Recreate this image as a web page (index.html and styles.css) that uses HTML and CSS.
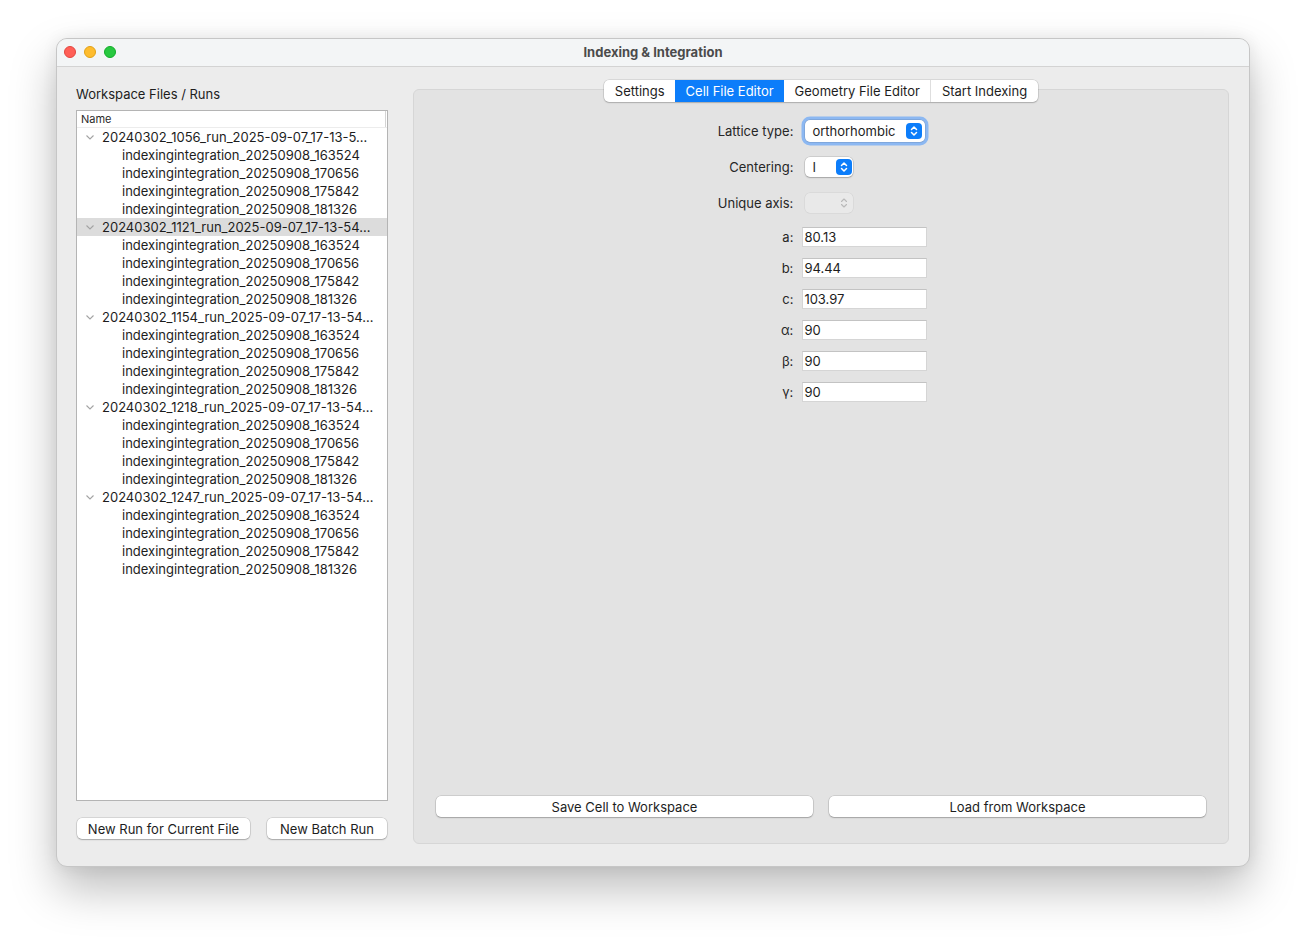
FILE: index.html
```html
<!DOCTYPE html>
<html lang="en">
<head>
    <meta charset="UTF-8">
    <title>Indexing &amp; Integration</title>
    <link rel="stylesheet" href="styles.css">
</head>
<body>
<div class="window">
    <div class="titlebar">
        <div class="lights">
            <span class="light close"></span>
            <span class="light min"></span>
            <span class="light max"></span>
        </div>
        <div class="title">Indexing &amp; Integration</div>
        <div></div>
    </div>

    <div class="content">
        <!-- workspace tree -->
        <div class="side">
            <div class="side-label">Workspace Files / Runs</div>
            <div class="tree">
                <div class="tree-head"><span>Name</span></div>
                <div class="tree-body">
                    <div class="row parent"><svg class="chev" viewBox="0 0 8 5"><polyline points="0.5,0.5 4,4 7.5,0.5"/></svg><span>20240302_1056_run_2025-09-07_17-13-5…</span></div>
                    <div class="row child">indexingintegration_20250908_163524</div>
                    <div class="row child">indexingintegration_20250908_170656</div>
                    <div class="row child">indexingintegration_20250908_175842</div>
                    <div class="row child">indexingintegration_20250908_181326</div>
                    <div class="row parent selected"><svg class="chev" viewBox="0 0 8 5"><polyline points="0.5,0.5 4,4 7.5,0.5"/></svg><span>20240302_1121_run_2025-09-07_17-13-54…</span></div>
                    <div class="row child">indexingintegration_20250908_163524</div>
                    <div class="row child">indexingintegration_20250908_170656</div>
                    <div class="row child">indexingintegration_20250908_175842</div>
                    <div class="row child">indexingintegration_20250908_181326</div>
                    <div class="row parent"><svg class="chev" viewBox="0 0 8 5"><polyline points="0.5,0.5 4,4 7.5,0.5"/></svg><span>20240302_1154_run_2025-09-07_17-13-54…</span></div>
                    <div class="row child">indexingintegration_20250908_163524</div>
                    <div class="row child">indexingintegration_20250908_170656</div>
                    <div class="row child">indexingintegration_20250908_175842</div>
                    <div class="row child">indexingintegration_20250908_181326</div>
                    <div class="row parent"><svg class="chev" viewBox="0 0 8 5"><polyline points="0.5,0.5 4,4 7.5,0.5"/></svg><span>20240302_1218_run_2025-09-07_17-13-54…</span></div>
                    <div class="row child">indexingintegration_20250908_163524</div>
                    <div class="row child">indexingintegration_20250908_170656</div>
                    <div class="row child">indexingintegration_20250908_175842</div>
                    <div class="row child">indexingintegration_20250908_181326</div>
                    <div class="row parent"><svg class="chev" viewBox="0 0 8 5"><polyline points="0.5,0.5 4,4 7.5,0.5"/></svg><span>20240302_1247_run_2025-09-07_17-13-54…</span></div>
                    <div class="row child">indexingintegration_20250908_163524</div>
                    <div class="row child">indexingintegration_20250908_170656</div>
                    <div class="row child">indexingintegration_20250908_175842</div>
                    <div class="row child">indexingintegration_20250908_181326</div>
                </div>
            </div>
            <div class="side-buttons">
                <button class="btn run-btn">New Run for Current File</button>
                <button class="btn batch-btn">New Batch Run</button>
            </div>
        </div>

        <!-- tab widget -->
        <div class="main">
            <div class="tabs">
                <div class="tab">Settings</div>
                <div class="tab active">Cell File Editor</div>
                <div class="tab">Geometry File Editor</div>
                <div class="tab sep">Start Indexing</div>
            </div>
            <div class="pane">
                <div class="form">
                    <label>Lattice type:</label>
                    <div class="combo wide focus">
                        <span>orthorhombic</span>
                        <span class="stepper"><svg viewBox="0 0 8 12"><polyline points="1.5,4.5 4,2 6.5,4.5"/><polyline points="1.5,7.5 4,10 6.5,7.5"/></svg></span>
                    </div>

                    <label>Centering:</label>
                    <div class="combo small">
                        <span>I</span>
                        <span class="stepper"><svg viewBox="0 0 8 12"><polyline points="1.5,4.5 4,2 6.5,4.5"/><polyline points="1.5,7.5 4,10 6.5,7.5"/></svg></span>
                    </div>

                    <label>Unique axis:</label>
                    <div class="combo small disabled">
                        <span></span>
                        <span class="stepper"><svg viewBox="0 0 8 12"><polyline points="1.5,4.5 4,2 6.5,4.5"/><polyline points="1.5,7.5 4,10 6.5,7.5"/></svg></span>
                    </div>

                    <label>a:</label>
                    <input class="field" type="text" value="80.13">
                    <label>b:</label>
                    <input class="field" type="text" value="94.44">
                    <label>c:</label>
                    <input class="field" type="text" value="103.97">
                    <label>α:</label>
                    <input class="field" type="text" value="90">
                    <label>β:</label>
                    <input class="field" type="text" value="90">
                    <label>γ:</label>
                    <input class="field" type="text" value="90">
                </div>

                <div class="actions">
                    <button class="btn">Save Cell to Workspace</button>
                    <button class="btn">Load from Workspace</button>
                </div>
            </div>
        </div>
    </div>
</div>
</body>
</html>
```

FILE: styles.css
```css
* {
    padding: 0;
    margin: 0;
    box-sizing: border-box;
}

html, body {
    width: 100%;
    height: 100%;
    background: #ffffff;
}

body {
    padding: 38px 0 0 56px;
    font-family: Inter, "Liberation Sans", sans-serif;
    font-size: 13px;
    color: #1d1d1d;
}

.window {
    width: 1194px;
    height: 829px;
    border: 1px solid #c6c6c6;
    border-radius: 11px;
    background: #ececec;
    overflow: hidden;
    display: flex;
    flex-direction: column;
    box-shadow: 0 22px 46px rgba(0, 0, 0, 0.26), 0 0 16px rgba(0, 0, 0, 0.07);
}

/* title bar */
.titlebar {
    height: 28px;
    padding-bottom: 2px;
    background: #f3f5f6;
    border-bottom: 1px solid #d3d3d3;
    display: grid;
    grid-template-columns: 1fr auto 1fr;
    align-items: center;
}

.lights {
    display: flex;
    gap: 8px;
    padding-left: 7px;
    margin-top: 1px;
}

.light {
    width: 12px;
    height: 12px;
    border-radius: 50%;
}

.close {
    background: #ff5f57;
    border: 0.5px solid #e2463f;
}

.min {
    background: #febc2e;
    border: 0.5px solid #e1a116;
}

.max {
    background: #28c840;
    border: 0.5px solid #12ac28;
}

.title {
    font-weight: 700;
    font-size: 13px;
    color: #4b4b4b;
}

/* content */
.content {
    flex: 1;
    display: flex;
    gap: 25px;
    padding: 13px 20px 22px 19px;
}

.side {
    width: 312px;
    display: flex;
    flex-direction: column;
}

.side-label {
    margin-top: 6px;
    line-height: 16px;
    margin-bottom: 8px;
}

.tree {
    flex: 1;
    background: #ffffff;
    border: 1px solid #b4b4b4;
    display: flex;
    flex-direction: column;
    overflow: hidden;
}

.tree-head {
    height: 17px;
    display: flex;
    border-bottom: 1px solid #ececec;
}

.tree-head span {
    flex: 1;
    margin-right: 1px;
    padding-left: 4px;
    font-size: 11px;
    line-height: 16px;
    color: #2a2a2a;
    border-right: 1px solid #d4d4d4;
}

.tree-body {
    flex: 1;
}

.row {
    height: 18px;
    line-height: 18px;
    white-space: nowrap;
    overflow: hidden;
}

.row.parent {
    display: flex;
    align-items: center;
    padding-left: 9px;
}

.row.parent span {
    margin-left: 8px;
}

.row.child {
    padding-left: 45px;
}

.row.selected {
    background: #dcdcdc;
}

.chev {
    width: 8px;
    height: 5px;
    fill: none;
    stroke: #a3a3a3;
    stroke-width: 1.1;
}

.side-buttons {
    display: flex;
    justify-content: space-between;
    margin: 17px 1px 5px;
}

.btn {
    height: 21px;
    font-family: inherit;
    font-size: 13px;
    color: #1d1d1d;
    background: #ffffff;
    border: none;
    border-radius: 5px;
    box-shadow: 0 0 0 0.5px rgba(0, 0, 0, 0.18), 0 1px 1.5px rgba(0, 0, 0, 0.22);
}

.run-btn {
    width: 173px;
}

.batch-btn {
    width: 120px;
}

/* tabs + pane */
.main {
    flex: 1;
    display: flex;
    flex-direction: column;
}

.tabs {
    align-self: center;
    display: flex;
    height: 22px;
    margin-bottom: -13px;
    position: relative;
    z-index: 1;
    background: #ffffff;
    border-radius: 5px;
    overflow: hidden;
    box-shadow: 0 0 0 0.5px rgba(0, 0, 0, 0.16), 0 1px 1.5px rgba(0, 0, 0, 0.18);
}

.tab {
    line-height: 22px;
    padding: 0 10.5px;
    color: #1d1d1d;
}

.tab.active {
    background: #0c7dfa;
    color: #ffffff;
}

.tab.sep {
    border-left: 1px solid #dedede;
}

.pane {
    flex: 1;
    background: #e3e3e3;
    border: 1px solid #d6d6d6;
    border-radius: 6px;
    padding: 23px 22px 26px;
    display: flex;
    flex-direction: column;
}

.form {
    display: grid;
    grid-template-columns: auto 125px;
    grid-template-rows: 36px 36px 36px;
    grid-auto-rows: 31px;
    column-gap: 9px;
    justify-content: center;
    align-items: center;
    margin-left: 3px;
}

.form label {
    text-align: right;
    color: #262626;
}

.combo {
    margin-left: 3px;
    height: 22px;
    background: #ffffff;
    border-radius: 5px;
    display: flex;
    align-items: center;
    justify-content: space-between;
    padding: 0 3px 0 7px;
    box-shadow: 0 0 0 0.5px rgba(0, 0, 0, 0.18), 0 1px 1.5px rgba(0, 0, 0, 0.2);
}

.combo.wide {
    width: 120px;
}

.combo.small {
    width: 48px;
    height: 20px;
    padding: 0 1px 0 7px;
}

.combo.focus {
    box-shadow: 0 0 0 0.5px rgba(0, 0, 0, 0.18), 0 0 0 3.5px #8cb8f2;
}

.stepper {
    width: 16px;
    height: 16px;
    border-radius: 4px;
    background: #0c7dfa;
    display: flex;
    align-items: center;
    justify-content: center;
}

.stepper svg {
    width: 8px;
    height: 12px;
    fill: none;
    stroke: #ffffff;
    stroke-width: 1.5;
    stroke-linecap: round;
    stroke-linejoin: round;
}

.combo.disabled {
    background: #e9e9e9;
    box-shadow: 0 0 0 0.5px rgba(0, 0, 0, 0.08);
}

.combo.disabled .stepper {
    background: transparent;
}

.combo.disabled .stepper svg {
    stroke: #b9b9b9;
    stroke-width: 1.1;
}

.field {
    width: 125px;
    height: 20px;
    background: #ffffff;
    border: 1px solid #d5d5d5;
    border-top-color: #c3c3c3;
    padding-left: 1px;
    font-family: inherit;
    font-size: 13px;
    color: #1d1d1d;
    outline: none;
}

.actions {
    margin-top: auto;
    display: flex;
    gap: 16px;
}

.actions .btn {
    flex: 1;
}
```
